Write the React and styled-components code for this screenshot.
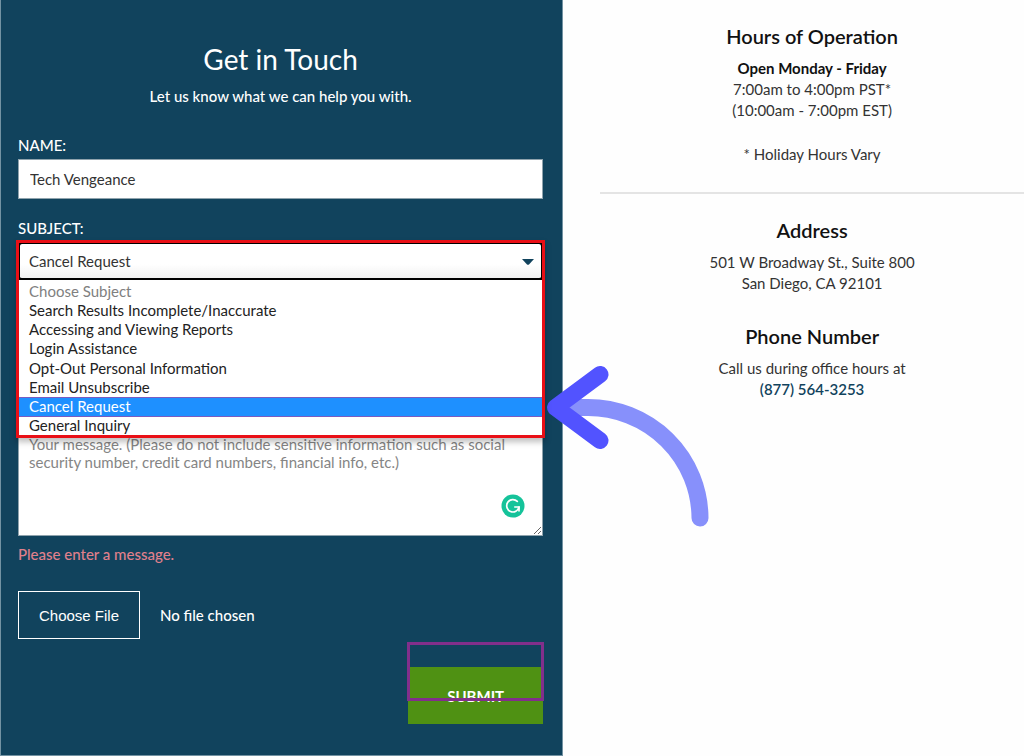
import React, { useRef, useState } from 'react'
import styled, { createGlobalStyle } from 'styled-components'

const subjects = [
    "Choose Subject",
    "Search Results Incomplete/Inaccurate",
    "Accessing and Viewing Reports",
    "Login Assistance",
    "Opt-Out Personal Information",
    "Email Unsubscribe",
    "Cancel Request",
    "General Inquiry",
]

export default function App() {

    const [name,setName]=useState("Tech Vengeance")
    const [subject,setSubject]=useState("Cancel Request")
    const [message,setMessage]=useState("")
    const [file,setFile]=useState("")
    const fileRef=useRef(null)

    return (
        <>
            <GlobalStyle />
            <Page>
                <FormPanel onSubmit={(e)=>e.preventDefault()}>
                    <Title>Get in Touch</Title>
                    <Intro>Let us know what we can help you with.</Intro>
                    <Label htmlFor="name">NAME:</Label>
                    <TextInput id="name" value={name} onChange={(e)=>setName(e.target.value)} />
                    <Label htmlFor="subject">SUBJECT:</Label>
                    <Picker>
                        <SelectBox>
                            <Select id="subject" value={subject} onChange={(e)=>setSubject(e.target.value)}>
                                {subjects.map((s)=><option key={s} value={s}>{s}</option>)}
                            </Select>
                            <Caret viewBox="0 0 12 6" aria-hidden="true">
                                <path d="M0 0h12L7 5.400Q6 6 5 5.400Z" fill="#11435d" />
                            </Caret>
                        </SelectBox>
                        <Options role="listbox" aria-label="Subject">
                            {subjects.map((s,i)=>(
                                <Option
                                    key={s}
                                    role="option"
                                    aria-selected={s===subject}
                                    $active={s===subject}
                                    $muted={i===0}
                                    onClick={()=>setSubject(s)}
                                >
                                    {s}
                                </Option>
                            ))}
                        </Options>
                    </Picker>
                    <MessageBox>
                        <Message
                            aria-label="Message"
                            value={message}
                            onChange={(e)=>setMessage(e.target.value)}
                            placeholder="Your message. (Please do not include sensitive information such as social security number, credit card numbers, financial info, etc.)"
                        />
                        <Checker viewBox="0 0 24 24" aria-hidden="true">
                            <circle cx="12" cy="12" r="11.500" fill="#15c39a" />
                            <path d="M16.300 7.400A6.200 6.200 0 1 0 18 13" fill="none" stroke="#fff" strokeWidth="1.700" strokeLinecap="round" />
                            <path d="M13.200 13H18V17.600" fill="none" stroke="#fff" strokeWidth="1.700" />
                        </Checker>
                    </MessageBox>
                    <ErrorText role="alert">Please enter a message.</ErrorText>
                    <FileRow>
                        <FileButton type="button" onClick={()=>fileRef.current.click()}>Choose File</FileButton>
                        <input
                            ref={fileRef}
                            type="file"
                            hidden
                            aria-label="Attachment"
                            onChange={(e)=>setFile(e.target.files[0]?e.target.files[0].name:"")}
                        />
                        <span>{file?file:"No file chosen"}</span>
                    </FileRow>
                    <SubmitRow>
                        <Submit type="submit">SUBMIT</Submit>
                        <Highlight />
                    </SubmitRow>
                    <Arrow viewBox="0 0 164 164" aria-hidden="true">
                        <path d="M26 43.500H42A112 111 0 0 1 154 154" fill="none" stroke="#8790fb" strokeWidth="17" strokeLinecap="round" />
                        <path d="M54 10.500L9.500 43.500L54 76.500" fill="none" stroke="#5253ff" strokeWidth="17" strokeLinecap="round" strokeLinejoin="round" />
                    </Arrow>
                </FormPanel>
                <Info>
                    <Block>
                        <Heading>Hours of Operation</Heading>
                        <Strong>Open Monday - Friday</Strong>
                        <Line>7:00am to 4:00pm PST*</Line>
                        <Line>(10:00am - 7:00pm EST)</Line>
                        <Note>* Holiday Hours Vary</Note>
                    </Block>
                    <Divider />
                    <Block>
                        <Heading>Address</Heading>
                        <Line>501 W Broadway St., Suite 800</Line>
                        <Line>San Diego, CA 92101</Line>
                    </Block>
                    <Block>
                        <Heading>Phone Number</Heading>
                        <Line>Call us during office hours at</Line>
                        <Phone href="tel:8775643253">(877) 564-3253</Phone>
                    </Block>
                </Info>
            </Page>
        </>
    )
}

const GlobalStyle = createGlobalStyle`
*{
    box-sizing: border-box;
}
body{
    margin: 0;
    background: #fefefe;
    color: #333;
    font-family: Lato, "Liberation Sans", sans-serif;
    font-size: 15px;
}
`
const Page = styled.div`
display: flex;
min-height: 100vh;
`
const FormPanel = styled.form`
flex: 0 0 55%;
position: relative;
z-index: 1;
display: flex;
flex-direction: column;
padding: 41px 19px 31px 17px;
background: #11435d;
border: 1px solid #7393a3;
border-top: none;
color: #fff;
font-weight: 500;
`
const Title = styled.h1`
margin: 0;
text-align: center;
font-size: 28px;
font-weight: 400;
line-height: 36px;
`
const Intro = styled.p`
margin: 9px 0 29px;
text-align: center;
line-height: 20px;
`
const Label = styled.label`
line-height: 20px;
margin-bottom: 4px;
`
const TextInput = styled.input`
height: 40px;
padding: 0 11px;
margin-bottom: 19px;
border: 1px solid #8fa3ad;
border-radius: 0;
background: #fff;
color: #333;
font: inherit;
font-weight: 400;
outline: none;
`
const Picker = styled.div`
position: relative;
z-index: 1;
margin: -2px -2px 0;
border: 3px solid #e90f16;
background: #fff;
box-shadow: 0 4px 6px rgba(0,0,0,0.25);
font-weight: 400;
`
const SelectBox = styled.div`
position: relative;
background: #000;
`
const Select = styled.select`
display: block;
width: 100%;
height: 37px;
padding: 0 9px;
appearance: none;
border: 1px solid #000;
border-bottom-width: 2px;
border-radius: 3px;
background: linear-gradient(#fff 60%, #f1f1f1);
color: #333;
font: inherit;
outline: none;
`
const Caret = styled.svg`
position: absolute;
right: 8px;
top: 16px;
width: 12px;
height: 6px;
pointer-events: none;
`
const Options = styled.ul`
display: flex;
flex-direction: column;
height: 155px;
margin: 0;
padding: 1px 0 0;
list-style: none;
`
const Option = styled.li`
flex: 1;
display: flex;
align-items: center;
padding: 0 10px;
cursor: default;
color: ${(p)=>p.$active?"#fff":p.$muted?"#808080":"#222"};
background: ${(p)=>p.$active?"#1e90ff":"#fff"};
box-shadow: ${(p)=>p.$active?"inset 0 1px #7a5cc0, 0 1px #7a5cc0":"none"};
position: relative;
z-index: ${(p)=>p.$active?1:0};
`
const MessageBox = styled.div`
position: relative;
margin-top: -3px;
`
const Message = styled.textarea`
display: block;
width: 100%;
height: 101px;
padding: 0 10px;
border: 1px solid #8fa3ad;
border-top: none;
background: #fff;
color: #333;
font: inherit;
font-weight: 400;
line-height: 18px;
outline: none;
&::placeholder{
    color: #858585;
}
`
const Checker = styled.svg`
position: absolute;
right: 18px;
bottom: 18px;
width: 24px;
height: 24px;
`
const ErrorText = styled.p`
margin: 8px 0 27px;
line-height: 20px;
color: #e0808c;
`
const FileRow = styled.div`
display: flex;
align-items: center;
gap: 20px;
`
const FileButton = styled.button`
width: 122px;
height: 48px;
padding: 0;
border: 1px solid #fff;
background: transparent;
color: #fff;
font-family: "Liberation Sans", Arial, sans-serif;
font-size: 15px;
`
const SubmitRow = styled.div`
position: relative;
align-self: flex-end;
margin-top: 28px;
`
const Submit = styled.button`
display: block;
width: 135px;
height: 57px;
padding: 0;
border: none;
background: #4f9113;
color: #fff;
font-family: inherit;
font-size: 15px;
font-weight: 700;
`
const Highlight = styled.div`
position: absolute;
top: -25px;
left: -1px;
right: -1px;
height: 59px;
border: 3px solid #822f8b;
pointer-events: none;
`
const Arrow = styled.svg`
position: absolute;
left: 100%;
top: 364px;
width: 164px;
height: 164px;
margin-left: -16px;
pointer-events: none;
`
const Info = styled.aside`
flex: 1;
margin-left: 37px;
padding-top: 21px;
text-align: center;
`
const Block = styled.section`
margin-bottom: 27px;
`
const Heading = styled.h2`
margin: 0 0 7px;
color: #111;
font-size: 20px;
font-weight: 600;
line-height: 30px;
`
const Line = styled.p`
margin: 0;
line-height: 21px;
`
const Strong = styled(Line)`
color: #111;
font-weight: 700;
`
const Note = styled(Line)`
margin-top: 23px;
`
const Divider = styled.hr`
margin: 0 0 21px;
border: none;
border-top: 2px solid #e4e4e4;
`
const Phone = styled.a`
display: block;
color: #11435d;
font-weight: 600;
line-height: 21px;
text-decoration: none;
`
